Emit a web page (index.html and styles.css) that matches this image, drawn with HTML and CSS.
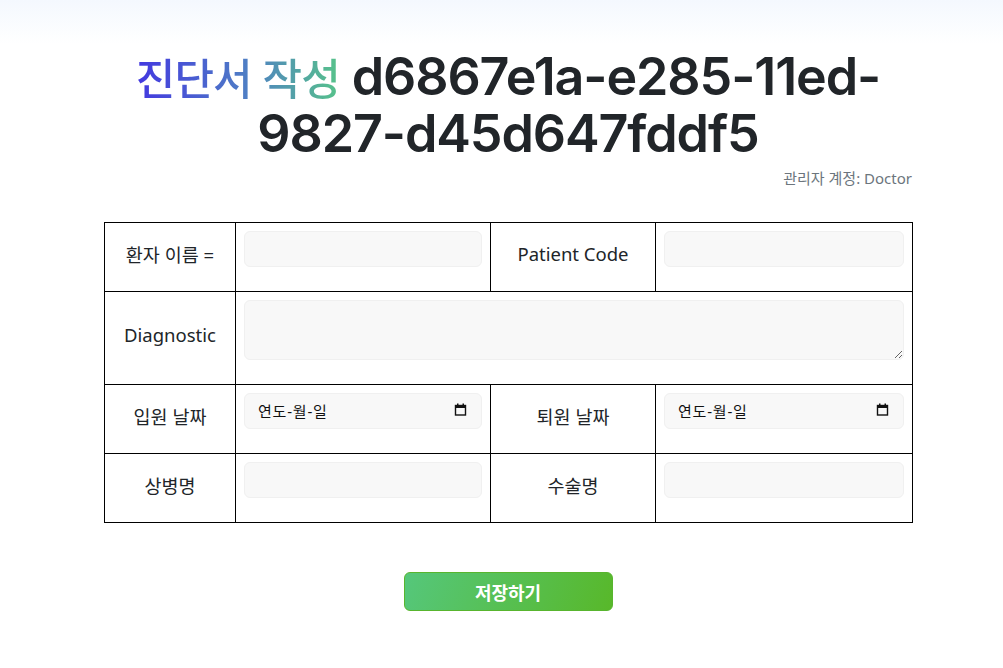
FILE: index.html
```html
<!DOCTYPE html>
<html lang="ko">
<head>
<meta charset="utf-8">
<title>진단서 작성</title>
<link rel="stylesheet" href="styles.css">
</head>
<body>
<div class="page">
  <h1 class="title"><span class="grad">진단서 작성</span> d6867e1a-e285-11ed-9827-d45d647fddf5</h1>
  <div class="account">관리자 계정: Doctor</div>
  <table class="form-table">
    <colgroup>
      <col class="c1"><col class="c2"><col class="c3"><col class="c4">
    </colgroup>
    <tr class="row">
      <td class="label">환자 이름 =</td>
      <td class="field"><input class="input" type="text"></td>
      <td class="label">Patient Code</td>
      <td class="field"><input class="input" type="text"></td>
    </tr>
    <tr class="row tall">
      <td class="label">Diagnostic</td>
      <td class="field" colspan="3"><textarea class="textarea"></textarea></td>
    </tr>
    <tr class="row">
      <td class="label">입원 날짜</td>
      <td class="field">
        <div class="input date"><span>연도-월-일</span>
          <svg width="13" height="13" viewBox="0 0 13 13"><rect x="1.5" y="2.5" width="10" height="9.5" fill="none" stroke="#111" stroke-width="1.4"/><rect x="1" y="2" width="11" height="3" fill="#111"/><rect x="3" y="0.5" width="1.5" height="2" fill="#111"/><rect x="8.5" y="0.5" width="1.5" height="2" fill="#111"/></svg>
        </div>
      </td>
      <td class="label">퇴원 날짜</td>
      <td class="field">
        <div class="input date"><span>연도-월-일</span>
          <svg width="13" height="13" viewBox="0 0 13 13"><rect x="1.5" y="2.5" width="10" height="9.5" fill="none" stroke="#111" stroke-width="1.4"/><rect x="1" y="2" width="11" height="3" fill="#111"/><rect x="3" y="0.5" width="1.5" height="2" fill="#111"/><rect x="8.5" y="0.5" width="1.5" height="2" fill="#111"/></svg>
        </div>
      </td>
    </tr>
    <tr class="row">
      <td class="label">상병명</td>
      <td class="field"><input class="input" type="text"></td>
      <td class="label">수술명</td>
      <td class="field"><input class="input" type="text"></td>
    </tr>
  </table>
  <div class="actions">
    <button class="save" type="button">저장하기</button>
  </div>
</div>
</body>
</html>
```

FILE: styles.css
```css
html, body {
  margin: 0;
  padding: 0;
}
body {
  background: linear-gradient(to bottom, #f4f8fe 0px, #ffffff 44px) no-repeat;
  background-color: #fff;
  font-family: "Noto Sans", "Noto Sans CJK KR", sans-serif;
  color: #212529;
}
.page {
  width: 808px;
  margin: 0 0 0 104px;
  padding-top: 48px;
}
.title {
  margin: 0;
  text-align: center;
  font-family: "Inter", "Noto Sans CJK KR", sans-serif;
  font-size: 52px;
  line-height: 57px;
  font-weight: 600;
  color: #212529;
  letter-spacing: -1.1px;
}
.grad {
  background: linear-gradient(90deg, #4338e0 0%, #4f7fc4 55%, #57c38a 100%);
  -webkit-background-clip: text;
  background-clip: text;
  color: transparent;
  font-family: "Noto Sans CJK KR", sans-serif;
  font-size: 43px;
  font-weight: 500;
  letter-spacing: -1px;
}
.account {
  text-align: right;
  font-size: 15px;
  line-height: 20px;
  color: #6c757d;
  margin-top: 6px;
}
.form-table {
  margin-top: 34px;
  width: 808px;
  border-collapse: collapse;
  table-layout: fixed;
}
.c1 { width: 131px; }
.c2 { width: 255px; }
.c3 { width: 165px; }
.c4 { width: 257px; }
.form-table td {
  border: 1px solid #000;
  padding: 0;
}
.row { height: 69px; }
.row.tall { height: 93px; }
.form-table .label {
  text-align: center;
  vertical-align: middle;
  font-size: 18.5px;
  color: #212529;
  padding-bottom: 7px;
}
.field {
  vertical-align: top;
}
.field .input, .field .textarea {
  display: block;
  box-sizing: border-box;
  margin: 8px 8px 0 8px;
  width: calc(100% - 16px);
  height: 36px;
  background: #f8f8f8;
  border: 1px solid #f0f0f0;
  border-radius: 6px;
  outline: none;
  font: inherit;
}
.field .textarea {
  height: 60px;
  resize: vertical;
}
.field .date {
  display: flex;
  align-items: center;
  justify-content: space-between;
  padding: 0 14px 2px 13px;
  font-size: 15px;
  letter-spacing: 0.8px;
  color: #111;
}
.date svg { display: block; margin-bottom: 1px; }
.actions {
  display: flex;
  justify-content: center;
  margin-top: 49px;
}
.save {
  width: 209px;
  height: 39px;
  border: 1px solid #58b52e;
  border-radius: 6px;
  background: linear-gradient(110deg, #55c77b 0%, #58b82a 100%);
  color: #fff;
  font-family: "Noto Sans CJK KR", sans-serif;
  font-size: 18px;
  font-weight: 700;
  padding: 0;
}
```
